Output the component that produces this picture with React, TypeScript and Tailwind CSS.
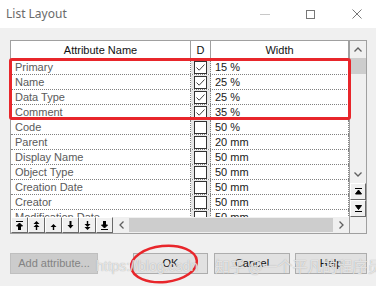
import React from 'react'

const rows = [
  { name: 'Primary', d: true, w: '15 %' },
  { name: 'Name', d: true, w: '25 %' },
  { name: 'Data Type', d: true, w: '25 %' },
  { name: 'Comment', d: true, w: '35 %' },
  { name: 'Code', d: false, w: '50 %' },
  { name: 'Parent', d: false, w: '20 mm' },
  { name: 'Display Name', d: false, w: '50 mm' },
  { name: 'Object Type', d: false, w: '50 mm' },
  { name: 'Creation Date', d: false, w: '50 mm' },
  { name: 'Creator', d: false, w: '50 mm' },
  { name: 'Modification Date', d: false, w: '50 mm' },
]

function Checkbox({ checked }: { checked: boolean }) {
  return (
    <div className="w-[13px] h-[13px] border border-[#333] bg-white flex items-center justify-center">
      {checked && (
        <svg width="11" height="11" viewBox="0 0 11 11">
          <path d="M1.5 5.5 L4.2 8.2 L9.5 2.5" fill="none" stroke="#444" strokeWidth="1" />
        </svg>
      )}
    </div>
  )
}

const toolIcons = [
  // top
  <path key="a" d="M0 0.5H7M3.5 2L0.5 5H2.5V9H4.5V5H6.5Z" stroke="#000" strokeWidth="1" fill="#000" />,
  // page up
  <path key="b" d="M3.5 0L0.5 3H6.5ZM3.5 3L0.5 6H6.5ZM2.8 6H4.2V9H2.8Z" fill="#000" />,
  // up
  <path key="c" d="M3.5 3L0.5 6H6.5ZM2.8 6H4.2V9H2.8Z" fill="#000" />,
  // down
  <path key="d" d="M2.5 0H4.5V4H6.5L3.5 7.5L0.5 4H2.5Z" fill="#000" />,
  // page down
  <path key="e" d="M2.8 0H4.2V3H2.8ZM0.5 3H6.5L3.5 6ZM0.5 6H6.5L3.5 9Z" fill="#000" />,
  // bottom
  <path key="f" d="M2.5 0H4.5V4H6.5L3.5 7L0.5 4H2.5ZM0 8.5H7" stroke="#000" strokeWidth="1" fill="#000" />,
]

function ToolButton({ children }: { children: React.ReactNode }) {
  return (
    <div className="w-[17px] h-[16px] bg-[#f0f0f0] border-t border-l border-t-white border-l-white border-r border-b border-r-[#696969] border-b-[#696969] flex items-center justify-center">
      <svg width="7" height="9" viewBox="0 0 7 9">
        {children}
      </svg>
    </div>
  )
}

function Button({ label, className, disabled }: { label: string; className: string; disabled?: boolean }) {
  return (
    <div
      className={
        'h-[21px] flex items-center justify-center text-[11px] border ' +
        (disabled ? 'bg-[#cccccc] border-[#bfbfbf] text-[#838383] ' : 'bg-[#e1e1e1] border-[#adadad] text-[#111] ') +
        className
      }
    >
      {label}
    </div>
  )
}

export default function App() {
  return (
    <div className="relative w-[376px] h-[286px] overflow-hidden bg-[#f0f0f0] font-['Liberation_Sans',Arial,sans-serif]">
      {/* title bar */}
      <div className="h-[28px] bg-white flex items-center">
        <span className="pl-[6px] text-[12px] text-[#6a6a6a] font-['Noto_Sans',sans-serif]">List Layout</span>
        <div className="ml-auto flex items-center h-full">
          <div className="w-[10px] h-px bg-[#c8c8c8] mr-[36px]" />
          <div className="w-[9px] h-[9px] border border-[#777] mr-[37px]" />
          <svg width="10" height="10" viewBox="0 0 10 10" className="mr-[14px]">
            <path d="M0.5 0.5L9.5 9.5M9.5 0.5L0.5 9.5" stroke="#777" strokeWidth="1" />
          </svg>
        </div>
      </div>

      {/* list frame */}
      <div className="relative mt-[12px] ml-[10px] w-[357px] h-[194px] border border-[#a0a0a0] bg-white flex">
        <div className="w-[338px] flex flex-col">
          {/* header */}
          <div className="h-[19px] flex border-b border-[#a0a0a0] text-[11px] text-[#111]">
            <div className="w-[180px] border-r border-[#a0a0a0] flex items-center justify-center">Attribute Name</div>
            <div className="w-[20px] border-r border-[#a0a0a0] flex items-center justify-center">D</div>
            <div className="flex-1 border-r border-[#a0a0a0] flex items-center justify-center">Width</div>
          </div>
          {/* rows */}
          <div className="h-[157px] overflow-hidden">
            {rows.map((r) => (
              <div key={r.name} className="h-[15px] flex border-b border-dotted border-[#808080] text-[11px] leading-[14px]">
                <div className="w-[180px] border-r border-dotted border-[#808080] pl-[4px] text-[#5a5a5a] whitespace-nowrap">
                  {r.name}
                </div>
                <div className="w-[20px] border-r border-dotted border-[#808080] flex items-center justify-center bg-[#e6e6e6]">
                  <Checkbox checked={r.d} />
                </div>
                <div className="flex-1 border-r border-dotted border-[#808080] pl-[4px] text-[#1a1a1a]">{r.w}</div>
              </div>
            ))}
          </div>
          {/* toolbar + horizontal scrollbar */}
          <div className="h-[16px] flex bg-[#f0f0f0]">
            {toolIcons.map((ic, i) => (
              <ToolButton key={i}>{ic}</ToolButton>
            ))}
            <div className="flex-1 flex items-center">
              <div className="w-[16px] flex items-center justify-center">
                <svg width="5" height="8" viewBox="0 0 5 8">
                  <path d="M4.5 0.5L1 4L4.5 7.5" fill="none" stroke="#606060" strokeWidth="1.3" />
                </svg>
              </div>
              <div className="flex-1 h-[14px] bg-[#cdcdcd]" />
              <div className="w-[16px] flex items-center justify-center">
                <svg width="5" height="8" viewBox="0 0 5 8">
                  <path d="M0.5 0.5L4 4L0.5 7.5" fill="none" stroke="#606060" strokeWidth="1.3" />
                </svg>
              </div>
            </div>
          </div>
        </div>

        {/* vertical scrollbar */}
        <div className="w-[17px] flex flex-col bg-[#f0f0f0] border-l border-[#a0a0a0]">
          <div className="h-[17px] flex items-center justify-center">
            <svg width="8" height="5" viewBox="0 0 8 5">
              <path d="M0.5 4.5L4 1L7.5 4.5" fill="none" stroke="#606060" strokeWidth="1.3" />
            </svg>
          </div>
          <div className="h-[16px] bg-[#cdcdcd]" />
          <div className="flex-1" />
          <div className="h-[17px] flex items-center justify-center">
            <svg width="8" height="5" viewBox="0 0 8 5">
              <path d="M0.5 0.5L4 4L7.5 0.5" fill="none" stroke="#606060" strokeWidth="1.3" />
            </svg>
          </div>
          <div className="h-[17px] border-t border-l border-t-white border-l-white border-r border-b border-r-[#696969] border-b-[#696969] flex items-center justify-center">
            <svg width="7" height="7" viewBox="0 0 7 7">
              <path d="M0 0.5H7M3.5 2L0.5 6H6.5Z" stroke="#000" strokeWidth="1" fill="#000" />
            </svg>
          </div>
          <div className="h-[17px] border-t border-l border-t-white border-l-white border-r border-b border-r-[#696969] border-b-[#696969] flex items-center justify-center">
            <svg width="7" height="7" viewBox="0 0 7 7">
              <path d="M0.5 0.5H6.5L3.5 4.5ZM0 6.5H7" stroke="#000" strokeWidth="1" fill="#000" />
            </svg>
          </div>
          <div className="h-[16px]" />
        </div>

        {/* red highlight around first rows */}
        <div className="absolute left-[-2px] top-[17px] w-[342px] h-[62px] border-[3px] border-[#e8262b] rounded-[3px]" />
      </div>

      {/* buttons */}
      <div className="mt-[19px] flex items-center">
        <Button label="Add attribute..." disabled className="ml-[10px] w-[88px]" />
        <Button label="OK" className="ml-[35px] w-[75px]" />
        <Button label="Cancel" className="ml-[6px] w-[76px]" />
        <Button label="Help" className="ml-[5px] w-[72px]" />
      </div>

      {/* red ellipse around OK */}
      <svg className="absolute left-[128px] top-[243px]" width="72" height="42" viewBox="0 0 72 42">
        <ellipse cx="36" cy="21" rx="33" ry="18" fill="none" stroke="#e8262b" strokeWidth="2.5" transform="rotate(-6 36 21)" />
      </svg>

      {/* watermark */}
      <div className="absolute left-[96px] top-[256px] text-[14px] text-white/70 [text-shadow:0_0_1px_#999] font-['Liberation_Sans',sans-serif] whitespace-nowrap">
        https://blog.csdn
      </div>
      <div className="absolute left-[215px] top-[255px] text-[15px] text-white/70 [text-shadow:0_0_1px_#999] font-['Noto_Sans_CJK_SC',sans-serif] whitespace-nowrap">
        知乎 @一个平凡的程序员
      </div>
    </div>
  )
}
